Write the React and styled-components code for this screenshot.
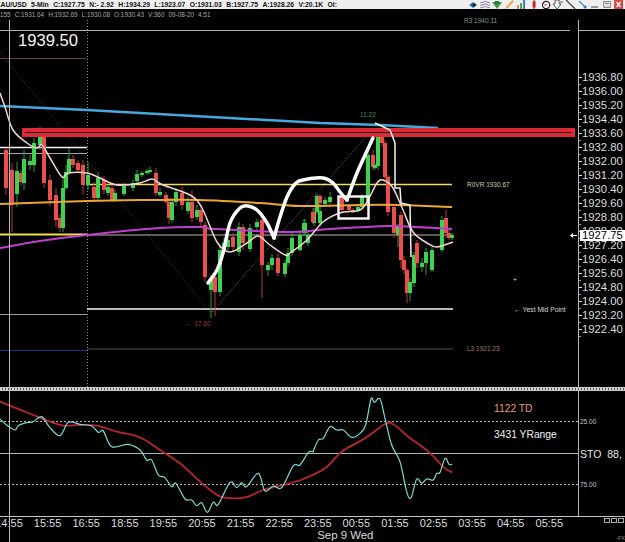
import React from 'react';
import styled, { createGlobalStyle } from 'styled-components';

const GlobalStyle = createGlobalStyle`
  html, body {
    margin: 0;
    background: #000;
  }
`;

const Terminal = styled.div`
  position: relative;
  width: 625px;
  height: 542px;
  overflow: hidden;
  display: flex;
  flex-direction: column;
  background: #000;
  font-family: "Liberation Sans", Arial, sans-serif;

  &::before {
    content: '';
    position: absolute;
    left: 9px;
    top: 20px;
    bottom: 0;
    width: 1px;
    background: #b8b8b8;
    z-index: 1;
  }
`;

const TitleBar = styled.div`
  flex: 0 0 9px;
  display: flex;
  align-items: center;
  gap: 4.4px;
  background: #efefef;
  color: #111;
  font-size: 6.8px;
  font-weight: 700;
  white-space: nowrap;
  overflow: hidden;
  margin-left: -4px;
`;

const Toolbar = styled.div`
  margin-left: auto;
  display: flex;
  align-items: center;
`;

const ToolIcon = styled.svg`
  width: 12.2px;
  height: 9px;
  flex: none;
`;

const InfoBar = styled.div`
  flex: 0 0 10px;
  display: flex;
  align-items: center;
  gap: 4px;
  color: #a8a8a8;
  font-size: 6.4px;
  white-space: nowrap;
`;

const ChartRow = styled.div`
  flex: 0 0 368px;
  display: flex;
`;

const StudyRow = styled.div`
  flex: 0 0 125px;
  display: flex;
  border-bottom: 1px solid #c4c4c4;
`;

const Canvas = styled.div`
  position: relative;
  flex: 0 0 578px;
`;

const Plot = styled.svg`
  display: block;
  width: 578px;
  height: 100%;
`;

const PlotLabel = styled.span`
  position: absolute;
  left: ${(p) => p.$x}px;
  top: ${(p) => p.$y}px;
  transform: translateY(-50%);
  color: ${(p) => p.$color || '#ddd'};
  font-size: ${(p) => p.$size || 6.5}px;
  white-space: pre;
  line-height: 1;
`;

const PriceAxis = styled.div`
  position: relative;
  flex: 1;
  border-left: 1px solid #b4b4b4;
  padding-top: 51.3px;
  margin-top: 1px;
  margin-bottom: -1px;
`;

const TopRule = styled.div`
  position: absolute;
  left: 0;
  right: 0;
  top: 10px;
  height: 1px;
  background: #b4b4b4;
`;

const PriceLabel = styled.div`
  position: relative;
  height: 13.97px;
  line-height: 13.97px;
  padding-left: 3px;
  color: #dcdcdc;
  font-size: 11.3px;

  &::before {
    content: '';
    position: absolute;
    left: 0;
    top: 6px;
    width: 3px;
    height: 1px;
    background: #ddd;
  }

  &::after {
    content: '';
    position: absolute;
    left: 0;
    top: 13px;
    width: 1.5px;
    height: 1px;
    background: #999;
  }
`;

const LastPrice = styled.div`
  position: absolute;
  left: 1px;
  top: 210px;
  width: 46px;
  height: 11px;
  padding-left: 2px;
  box-sizing: border-box;
  background: #fff;
  color: #000;
  font-size: 11.3px;
  line-height: 11px;
`;

const LastArrow = styled.svg`
  position: absolute;
  left: -9px;
  top: 213px;
  width: 7px;
  height: 5px;
`;

const StudyAxis = styled.div`
  position: relative;
  flex: 1;
  border-left: 1px solid #b4b4b4;
  overflow: hidden;
`;

const Separator = styled.div`
  flex: 0 0 4px;
  border-top: 1px solid #c8c8c8;
  border-bottom: 1px solid #c8c8c8;
  box-sizing: border-box;
  background: repeating-linear-gradient(90deg, #d0d0d0 0 2px, #555 2px 3px);
`;

const TimeAxis = styled.div`
  position: relative;
  flex: 1;
  display: flex;
  margin-left: -10.3px;
`;

const TimeColumn = styled.div`
  flex: 0 0 38.6px;
  text-align: center;
  color: #dcdcdc;
  font-size: 11px;
  line-height: 13px;
`;

const DateLabel = styled.span`
  position: absolute;
  left: 327.5px;
  top: 12px;
  color: #dcdcdc;
  font-size: 11.4px;
  line-height: 13px;
  white-space: nowrap;
`;

const PaneBoxes = styled.div`
  position: absolute;
  right: 1px;
  top: 1px;
  display: flex;
  gap: 1px;
`;

const PaneBox = styled.span`
  width: 6px;
  height: 5px;
  border: 1px solid #aaa;
  box-sizing: border-box;
`;

const FxMark = styled.span`
  position: absolute;
  right: 0;
  top: 18px;
  color: #888;
  font-size: 5.5px;
`;

const titleParts = ['XAU/USD', '5-Min', 'C:1927.75', 'N:- 2.92', 'H:1934.29', 'L:1923.07', 'O:1931.03', 'B:1927.75', 'A:1928.26', 'V:20.1K', 'OI:'];
const infoParts = ['155', 'C:1931.64', 'H:1932.69', 'L:1930.08', 'O:1930.43', 'V:360', '09-08-20', '4:51'];
const prices = ['1936.80', '1936.00', '1935.20', '1934.40', '1933.60', '1932.80', '1932.00', '1931.20', '1930.40', '1929.60', '1928.80', '1928.00', '1927.20', '1926.40', '1925.60', '1924.80', '1924.00', '1923.20', '1922.40'];
const times = ['14:55', '15:55', '16:55', '18:55', '19:55', '20:55', '21:55', '22:55', '23:55', '00:55', '01:55', '02:55', '03:55', '04:55', '05:55'];

// bars as read off the chart: colour, x, body top, body bottom, wick top, wick bottom
const bars = [
  ['r', 6, 150, 188, 148, 195], ['r', 12, 170, 205, 163, 232], ['g', 17, 171, 194, 162, 207],
  ['r', 21, 173, 182, 170, 186], ['g', 24, 159, 183, 150, 190], ['g', 30, 161, 165, 155, 170],
  ['g', 34, 143, 165, 138, 172], ['g', 40, 137, 145, 127, 150], ['r', 44, 137, 183, 132, 188],
  ['r', 50, 180, 200, 175, 206], ['r', 56, 195, 220, 188, 227], ['r', 60, 218, 228, 214, 232],
  ['g', 63, 188, 228, 175, 232], ['g', 66, 172, 188, 165, 190], ['g', 69, 159, 172, 148, 175],
  ['r', 73, 159, 165, 155, 168], ['r', 78, 163, 170, 160, 173], ['r', 83, 165, 185, 160, 194],
  ['g', 88, 175, 185, 162, 190], ['r', 94, 187, 198, 182, 200], ['g', 98, 178, 198, 172, 200],
  ['r', 104, 180, 190, 176, 194], ['g', 108, 187, 193, 184, 196], ['r', 112, 188, 200, 184, 202],
  ['g', 115, 193, 200, 190, 202], ['g', 124, 186, 194, 183, 196], ['g', 133, 183, 188, 180, 191],
  ['g', 137, 174, 181, 170, 184], ['g', 142, 173, 175, 171, 177], ['g', 147, 171, 173, 169, 175],
  ['g', 150, 170, 172, 167, 174], ['r', 156, 173, 193, 168, 196], ['g', 160, 192, 195, 188, 197],
  ['r', 166, 195, 202, 192, 204], ['r', 169, 202, 218, 198, 224], ['g', 172, 202, 220, 198, 223],
  ['g', 176, 192, 202, 188, 206], ['r', 182, 193, 205, 187, 210], ['g', 188, 202, 211, 197, 214],
  ['r', 192, 202, 218, 190, 222], ['g', 197, 210, 217, 205, 220], ['r', 201, 210, 222, 205, 226],
  ['r', 205, 225, 277, 222, 282], ['g', 211, 280, 290, 275, 318], ['r', 215, 277, 292, 275, 316],
  ['g', 220, 250, 292, 245, 296], ['g', 224, 243, 250, 238, 254], ['g', 228, 240, 247, 235, 250],
  ['r', 233, 237, 247, 233, 252], ['g', 239, 227, 252, 222, 256], ['r', 243, 227, 243, 224, 250],
  ['g', 250, 228, 249, 224, 252], ['g', 257, 222, 227, 219, 231], ['r', 262, 220, 265, 216, 298],
  ['g', 268, 265, 270, 262, 276], ['g', 272, 258, 265, 254, 270], ['r', 278, 258, 273, 254, 276],
  ['g', 285, 263, 274, 260, 277], ['g', 288, 253, 263, 248, 266], ['g', 292, 238, 253, 232, 256],
  ['g', 300, 235, 250, 230, 252], ['g', 304, 223, 233, 219, 236], ['g', 305, 223, 233, 219, 236],
  ['g', 314, 212, 223, 208, 226], ['g', 308, 235, 243, 232, 246], ['g', 320, 211, 223, 206, 226],
  ['r', 313, 212, 222, 208, 224], ['g', 317, 196, 212, 194, 214], ['r', 320, 196, 203, 194, 206],
  ['g', 325, 200, 204, 197, 206], ['g', 330, 197, 202, 192, 204], ['r', 342, 197, 210, 192, 212],
  ['r', 349, 206, 210, 204, 212], ['r', 353, 210, 212, 208, 213], ['g', 358, 207, 210, 205, 212],
  ['g', 362, 197, 207, 194, 209], ['g', 368, 155, 203, 150, 206], ['r', 373, 155, 167, 150, 170],
  ['g', 375, 165, 168, 163, 170], ['g', 378, 137, 166, 133, 170], ['r', 382, 137, 143, 133, 146],
  ['r', 385, 143, 177, 140, 180], ['r', 388, 177, 212, 175, 216], ['r', 394, 207, 233, 205, 238],
  ['g', 398, 227, 235, 224, 247], ['r', 401, 215, 260, 212, 268], ['r', 404, 260, 270, 256, 274],
  ['r', 407, 270, 293, 268, 303], ['g', 410, 282, 293, 278, 301], ['g', 414, 255, 283, 252, 287],
  ['r', 417, 243, 263, 240, 268], ['g', 422, 263, 267, 258, 272], ['g', 426, 252, 263, 248, 275],
  ['g', 432, 250, 270, 247, 272], ['g', 442, 220, 250, 216, 252], ['r', 446, 218, 233, 210, 238],
  ['r', 449, 233, 238, 230, 240], ['g', 452, 235, 238, 233, 240],
];

const line = (points) => points.map(([x, y]) => `${x},${y}`).join(' ');

// catmull-rom through the points, the moving averages are soft curves on the chart
const smooth = (points) =>
  points.reduce((d, [x, y], i) => {
    if (i === 0) return `M${x} ${y}`;
    const [ax, ay] = points[i - 2] || points[i - 1];
    const [bx, by] = points[i - 1];
    const [cx, cy] = points[i + 1] || [x, y];
    const c1 = `${(bx + (x - ax) / 6).toFixed(1)} ${(by + (y - ay) / 6).toFixed(1)}`;
    const c2 = `${(x - (cx - bx) / 6).toFixed(1)} ${(y - (cy - by) / 6).toFixed(1)}`;
    return `${d} C${c1} ${c2} ${x} ${y}`;
  }, '');

// study curves were read from two 3x crops, so convert them back here
const fromCrop = (points, left, top) => points.map(([x, y]) => [left + x / 3, top + y / 3]);

const movingAverage = [
  [0, 93], [5, 107], [13, 130], [27, 143], [37, 148], [42, 145], [50, 158], [62, 177], [68, 173], [87, 173],
  [100, 178], [117, 185], [140, 183], [152, 179], [163, 185], [190, 195], [202, 208], [217, 242], [230, 252],
  [247, 243], [258, 236], [270, 245], [285, 255], [290, 253], [307, 240], [323, 222], [340, 213], [360, 210],
  [368, 200], [377, 183], [383, 180], [393, 188], [403, 210], [413, 232], [427, 243], [437, 247], [453, 242],
];

// the hand drawn stroke has two sharp turns, so it is kept in three pieces
const handStrokes = [
  [[208, 283], [217, 270], [223, 253], [230, 223], [240, 208], [248, 206], [257, 210], [267, 223], [274, 238]],
  [[274, 238], [280, 217], [287, 197], [295, 184], [303, 180], [323, 178], [333, 183], [340, 192], [347, 200]],
  [[347, 200], [357, 173], [373, 138]],
];

const handOutline = [
  [375, 123], [390, 130], [395, 143], [395, 188], [400, 188], [401, 203], [410, 205], [411, 257],
];

const redCurve = [
  ...fromCrop([[0, 80], [50, 100], [100, 120], [150, 140], [190, 152], [240, 150], [290, 152], [350, 170], [390, 178], [430, 192], [480, 225], [540, 265], [600, 320], [640, 352], [670, 367], [735, 367], [790, 345], [850, 330], [910, 312]], 0, 375),
  ...fromCrop([[60, 280], [110, 230], [180, 190], [240, 147], [265, 148], [310, 185], [370, 230], [420, 280], [442, 292]], 305, 375),
];

const cyanCurve = [
  ...fromCrop([[0, 132], [20, 150], [45, 165], [55, 152], [80, 143], [100, 140], [125, 125], [150, 158], [180, 182], [205, 142], [240, 148], [275, 153], [295, 172], [310, 168], [335, 215], [385, 208], [420, 225], [440, 255], [455, 255], [475, 300], [495, 308], [515, 335], [528, 325], [555, 372], [575, 375], [590, 392], [605, 383], [622, 412], [640, 382], [655, 388], [690, 322], [710, 338], [725, 323], [740, 335], [775, 295], [795, 348], [820, 333], [845, 338], [880, 272], [900, 270], [925, 232], [940, 230]], 0, 375),
  ...fromCrop([[25, 228], [40, 195], [55, 190], [75, 155], [95, 165], [115, 165], [140, 187], [165, 175], [182, 150], [198, 72], [208, 82], [225, 72], [240, 130], [260, 210], [285, 260], [305, 350], [318, 368], [335, 312], [350, 325], [365, 312], [385, 315], [395, 295], [405, 292], [420, 250], [432, 268], [442, 268]], 305, 375),
];

function Candle({ color, x, top, bottom, wickTop, wickBottom }) {
  const fill = color === 'g' ? '#3fd24f' : '#ea4f4c';
  const wick = color === 'g' ? '#2f9c3e' : '#b83a3a';
  return (
    <>
      <line x1={x} x2={x} y1={wickTop} y2={wickBottom} stroke={wick} strokeWidth="1" />
      <rect x={x - 2} y={top} width="4" height={bottom - top} fill={fill} />
    </>
  );
}

function ToolbarIcons() {
  return (
    <Toolbar>
      <ToolIcon viewBox="0 0 12 9"><path d="M2 5l4-3 4 3-4 3z" fill="#2b6f96" /><circle cx="7" cy="5" r="1.6" fill="#123" /></ToolIcon>
      <ToolIcon viewBox="0 0 12 9"><path d="M1 3q5-3 10 0M1 5.500q5-3 10 0M1 8q5-3 10 0" fill="none" stroke="#9a7ab0" /></ToolIcon>
      <ToolIcon viewBox="0 0 12 9"><path d="M1 2h10L6 9z" fill="#3c9a3c" /><path d="M4 1h4v3H4z" fill="#2b7a4a" /></ToolIcon>
      <ToolIcon viewBox="0 0 12 9"><path d="M2 9l1-2 6-7 2 1-6 7z" fill="#e8a850" /></ToolIcon>
      <ToolIcon viewBox="0 0 12 9"><path d="M2 5h2v4H2z" fill="#e09040" /><path d="M5 3h2v6H5z" fill="#40a060" /><path d="M8 0h2v9H8z" fill="#3080c0" /></ToolIcon>
      <ToolIcon viewBox="0 0 12 9"><path d="M6 0v9" stroke="#702020" /><path d="M4.500 1.500h3v6h-3z" fill="#d02030" /></ToolIcon>
      <ToolIcon viewBox="0 0 12 9"><circle cx="6" cy="5" r="3.600" fill="#fff" stroke="#222" strokeWidth="1.200" /><path d="M4 5h3" stroke="#c03030" /></ToolIcon>
      <ToolIcon viewBox="0 0 12 9"><path d="M3 0h4v4h2L5 9 1 4h2z" fill="#fff" stroke="#333" strokeWidth=".8" /><path d="M8 2h3" stroke="#555" /></ToolIcon>
      <ToolIcon viewBox="0 0 12 9"><path d="M2 0l9 9" stroke="#444" strokeWidth="1.300" /></ToolIcon>
      <ToolIcon viewBox="0 0 12 9"><path d="M3 1l6 6" stroke="#4a90c0" strokeWidth="1.400" /><circle cx="9" cy="7" r="1.500" fill="#3a7ab0" /></ToolIcon>
      <ToolIcon viewBox="0 0 12 9"><path d="M3 6h7v2H3z" fill="#9a9a9a" /></ToolIcon>
      <ToolIcon viewBox="0 0 12 9"><path d="M2.500 1.500h7v6h-7z" fill="#ddd" stroke="#8a8a8a" /><path d="M4 3.500h4" stroke="#8a8a8a" /></ToolIcon>
      <ToolIcon viewBox="0 0 12 9"><path d="M1 0h9v9H1z" fill="#d84848" /><path d="M3.500 2l4 5m0-5l-4 5" stroke="#fff" strokeWidth="1.300" /></ToolIcon>
    </Toolbar>
  );
}

function PriceChart() {
  return (
    <Canvas>
      <Plot viewBox="0 19 578 368">
        <line x1="0" x2="570" y1="30.500" y2="30.500" stroke="#b4b4b4" />
        <line x1="0" x2="87" y1="58.500" y2="58.500" stroke="#6a3a34" />
        <line x1="87.500" x2="87.500" y1="20" y2="387" stroke="#8a8a8a" strokeDasharray="1 2" />

        <line x1="0" x2="210" y1="52" y2="312" stroke="#6a3434" strokeDasharray="1 2" />
        <line x1="212" x2="372" y1="312" y2="130" stroke="#777" strokeDasharray="1 2" />

        <polyline points={line([[0, 106], [87, 110], [320, 123], [380, 125], [438, 128]])} fill="none" stroke="#45a8e0" strokeWidth="2.500" />

        <line x1="0" x2="87" y1="147.500" y2="147.500" stroke="#f4f4f4" strokeWidth="1.500" />
        <line x1="0" x2="87" y1="153.500" y2="153.500" stroke="#a8a8a8" />
        <line x1="87" x2="452" y1="184.500" y2="184.500" stroke="#f2e05a" strokeWidth="1.500" />
        <line x1="0" x2="87" y1="234.500" y2="234.500" stroke="#efe04a" strokeWidth="2" />
        <line x1="87" x2="452" y1="235" y2="235" stroke="#b8b8a8" />
        <line x1="87" x2="453" y1="309" y2="309" stroke="#f4f4f4" strokeWidth="1.500" />
        <line x1="0" x2="87" y1="314.500" y2="314.500" stroke="#a0a0a0" />
        <line x1="87" x2="453" y1="349" y2="349" stroke="#5e4c46" />
        <line x1="0" x2="87" y1="350.500" y2="350.500" stroke="#22357a" />

        {bars.map(([color, x, top, bottom, wickTop, wickBottom], i) => (
          <Candle key={i} color={color} x={x} top={top} bottom={bottom} wickTop={wickTop} wickBottom={wickBottom} />
        ))}

        <path d={smooth([[0, 204], [87, 201], [150, 200], [200, 200], [260, 203], [300, 206], [360, 205], [400, 205], [452, 207]])} fill="none" stroke="#eea532" strokeWidth="2" />
        <path d={smooth([[0, 248], [40, 241], [87, 235], [160, 228], [200, 227], [215, 229], [290, 232], [330, 229], [390, 226], [415, 227], [452, 229]])} fill="none" stroke="#c23ed0" strokeWidth="2" />
        <path d={smooth(movingAverage)} fill="none" stroke="#f3d6d2" strokeWidth="1.500" />

        <rect x="22" y="128" width="553" height="9" fill="#dd2a36" />
        <line x1="25" x2="572" y1="132.500" y2="132.500" stroke="#1a0406" />

        {handStrokes.map((stroke, i) => (
          <path key={i} d={smooth(stroke)} fill="none" stroke="#fff" strokeWidth="3.500" strokeLinecap="round" />
        ))}
        <polyline points={line(handOutline)} fill="none" stroke="#f4f4f4" strokeWidth="1.500" />
        <rect x="338.500" y="196.500" width="30" height="22" fill="none" stroke="#f4f4f4" strokeWidth="2.500" />
      </Plot>
      <PlotLabel $x={18} $y={22} $size={16.6} $color="#f4f4f4">1939.50</PlotLabel>
      <PlotLabel $x={464} $y={1.5} $color="#7f9a8a">R3 1940.11</PlotLabel>
      <PlotLabel $x={360} $y={96} $color="#3f8f58">11.22</PlotLabel>
      <PlotLabel $x={467} $y={165.5} $color="#cfcfa8">R0VR 1930.67</PlotLabel>
      <PlotLabel $x={186} $y={304.5} $color="#a83232">← 17.60</PlotLabel>
      <PlotLabel $x={514} $y={290.5} $size={6.8} $color="#d8d8d8">← Yest Mid Point</PlotLabel>
      <PlotLabel $x={467} $y={330} $color="#a07c60">L3 1921.23</PlotLabel>
      <PlotLabel $x={513} $y={261} $color="#ddd">+</PlotLabel>
    </Canvas>
  );
}

function StudyChart() {
  return (
    <Canvas>
      <Plot viewBox="0 391 578 125">
        <line x1="0" x2="578" y1="421.500" y2="421.500" stroke="#b8b8b8" strokeDasharray="2 2" />
        <line x1="0" x2="578" y1="453.500" y2="453.500" stroke="#b4b4b4" />
        <line x1="0" x2="578" y1="484.500" y2="484.500" stroke="#b8b8b8" strokeDasharray="2 2" />
        <path d={smooth(redCurve)} fill="none" stroke="#b8262e" strokeWidth="1.800" />
        <path d={smooth(cyanCurve)} fill="none" stroke="#78dcd2" strokeWidth="1.200" />
      </Plot>
      <PlotLabel $x={494} $y={18} $size={10.3} $color="#e79a6c">1122 TD</PlotLabel>
      <PlotLabel $x={494} $y={44} $size={10.3} $color="#f0f0f0">3431 YRange</PlotLabel>
    </Canvas>
  );
}

export default function App() {
  return (
    <Terminal>
      <GlobalStyle />
      <TitleBar>
        {titleParts.map((part) => (
          <span key={part}>{part}</span>
        ))}
        <ToolbarIcons />
      </TitleBar>
      <InfoBar>
        {infoParts.map((part) => (
          <span key={part}>{part}</span>
        ))}
      </InfoBar>
      <ChartRow>
        <PriceChart />
        <PriceAxis>
          <TopRule />
          {prices.map((price) => (
            <PriceLabel key={price}>{price}</PriceLabel>
          ))}
          <LastArrow viewBox="0 0 7 5">
            <path d="M0 2.500L3 0v2h4v1H3v2z" fill="#fff" />
          </LastArrow>
          <LastPrice>1927.75</LastPrice>
        </PriceAxis>
      </ChartRow>
      <Separator />
      <StudyRow>
        <StudyChart />
        <StudyAxis>
          <PlotLabel $x={1} $y={30.5} $size={6.5} $color="#c8c8c8">25.00</PlotLabel>
          <PlotLabel $x={1} $y={63} $size={10.5} $color="#e4e4e4">{'STO  88,'}</PlotLabel>
          <PlotLabel $x={1} $y={93.5} $size={6.5} $color="#c8c8c8">75.00</PlotLabel>
        </StudyAxis>
      </StudyRow>
      <TimeAxis>
        {times.map((time) => (
          <TimeColumn key={time}>{time}</TimeColumn>
        ))}
        <DateLabel>Sep 9 Wed</DateLabel>
        <PaneBoxes>
          <PaneBox />
          <PaneBox />
          <PaneBox />
        </PaneBoxes>
        <FxMark>-FX</FxMark>
      </TimeAxis>
    </Terminal>
  );
}
